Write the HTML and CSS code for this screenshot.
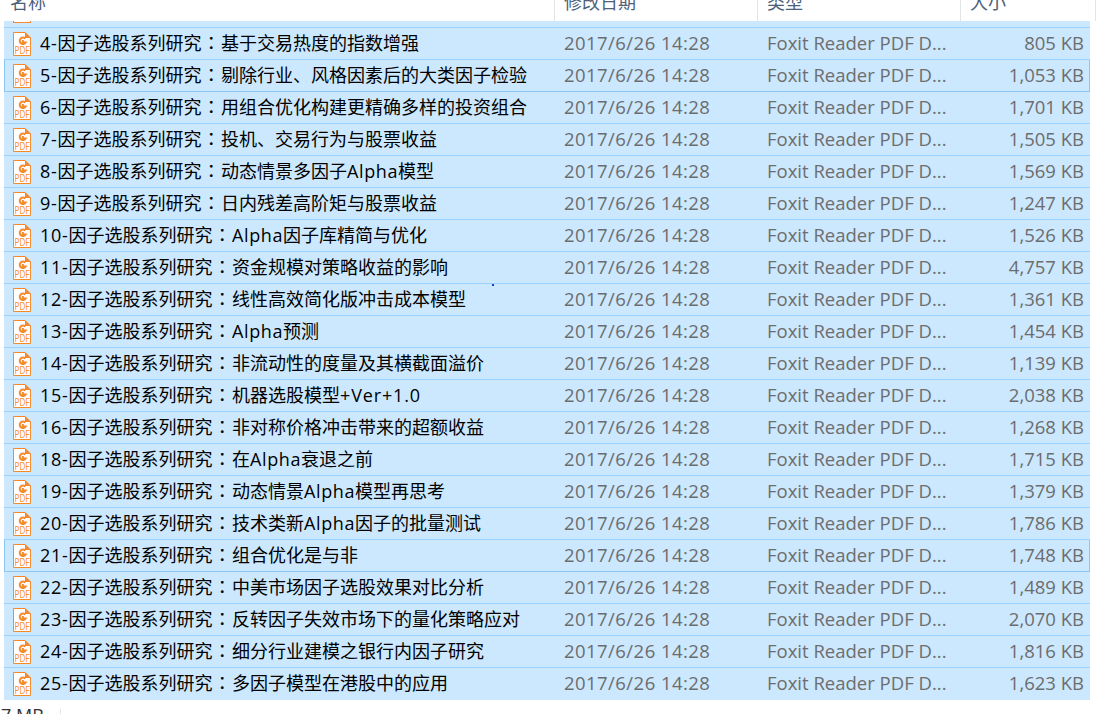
FILE: index.html
```html
<!DOCTYPE html>
<html lang="zh-CN">
<head>
    <meta charset="UTF-8">
    <title>因子选股系列研究</title>
    <link rel="stylesheet" href="styles.css">
</head>
<body>
    <!-- PDF file icon, reused by every row -->
    <svg class="defs" width="0" height="0">
        <symbol id="pdf" viewBox="0 0 18 24">
            <path d="M0.5 0.5H12L17.5 6V23.5H0.5Z" fill="#fff" stroke="#f58a2c"/>
            <path d="M12 0L18 6H12Z" fill="#f58a2c"/>
            <path d="M12.3 6.6A3.2 3.2 0 1 0 12.7 10.4H9.8V9H8.8" fill="none" stroke="#f58a2c" stroke-width="2"/>
            <text x="9" y="22" class="pdf-label" textLength="15" lengthAdjust="spacingAndGlyphs">PDF</text>
        </symbol>
    </svg>

    <!-- Column headers -->
    <div class="header">
        <div class="head-cell head-name">名称</div>
        <div class="head-cell head-date">修改日期</div>
        <div class="head-cell head-type">类型</div>
        <div class="head-cell head-size">大小</div>
    </div>

    <!-- File list -->
    <div class="list">
        <div class="row row-cut"><div class="icon-cut"></div></div>
        <div class="row"><svg class="icon"><use href="#pdf"/></svg><span class="name"><span class="num">4-</span>因子选股系列研究<span class="colon">：</span>基于交易热度的指数增强</span><span class="date">2017/6/26 14:28</span><span class="type">Foxit Reader PDF D...</span><span class="size">805 KB</span></div>
        <div class="row focus"><svg class="icon"><use href="#pdf"/></svg><span class="name"><span class="num">5-</span>因子选股系列研究<span class="colon">：</span>剔除行业、风格因素后的大类因子检验</span><span class="date">2017/6/26 14:28</span><span class="type">Foxit Reader PDF D...</span><span class="size">1,053 KB</span></div>
        <div class="row"><svg class="icon"><use href="#pdf"/></svg><span class="name"><span class="num">6-</span>因子选股系列研究<span class="colon">：</span>用组合优化构建更精确多样的投资组合</span><span class="date">2017/6/26 14:28</span><span class="type">Foxit Reader PDF D...</span><span class="size">1,701 KB</span></div>
        <div class="row"><svg class="icon"><use href="#pdf"/></svg><span class="name"><span class="num">7-</span>因子选股系列研究<span class="colon">：</span>投机、交易行为与股票收益</span><span class="date">2017/6/26 14:28</span><span class="type">Foxit Reader PDF D...</span><span class="size">1,505 KB</span></div>
        <div class="row"><svg class="icon"><use href="#pdf"/></svg><span class="name"><span class="num">8-</span>因子选股系列研究<span class="colon">：</span>动态情景多因子<span class="latin">Alpha</span>模型</span><span class="date">2017/6/26 14:28</span><span class="type">Foxit Reader PDF D...</span><span class="size">1,569 KB</span></div>
        <div class="row"><svg class="icon"><use href="#pdf"/></svg><span class="name"><span class="num">9-</span>因子选股系列研究<span class="colon">：</span>日内残差高阶矩与股票收益</span><span class="date">2017/6/26 14:28</span><span class="type">Foxit Reader PDF D...</span><span class="size">1,247 KB</span></div>
        <div class="row"><svg class="icon"><use href="#pdf"/></svg><span class="name"><span class="num">10-</span>因子选股系列研究<span class="colon">：</span><span class="latin">Alpha</span>因子库精简与优化</span><span class="date">2017/6/26 14:28</span><span class="type">Foxit Reader PDF D...</span><span class="size">1,526 KB</span></div>
        <div class="row"><svg class="icon"><use href="#pdf"/></svg><span class="name"><span class="num">11-</span>因子选股系列研究<span class="colon">：</span>资金规模对策略收益的影响</span><span class="date">2017/6/26 14:28</span><span class="type">Foxit Reader PDF D...</span><span class="size">4,757 KB</span></div>
        <div class="row"><svg class="icon"><use href="#pdf"/></svg><span class="name"><span class="num">12-</span>因子选股系列研究<span class="colon">：</span>线性高效简化版冲击成本模型</span><span class="date">2017/6/26 14:28</span><span class="type">Foxit Reader PDF D...</span><span class="size">1,361 KB</span><i class="speck"></i></div>
        <div class="row"><svg class="icon"><use href="#pdf"/></svg><span class="name"><span class="num">13-</span>因子选股系列研究<span class="colon">：</span><span class="latin">Alpha</span>预测</span><span class="date">2017/6/26 14:28</span><span class="type">Foxit Reader PDF D...</span><span class="size">1,454 KB</span></div>
        <div class="row"><svg class="icon"><use href="#pdf"/></svg><span class="name"><span class="num">14-</span>因子选股系列研究<span class="colon">：</span>非流动性的度量及其横截面溢价</span><span class="date">2017/6/26 14:28</span><span class="type">Foxit Reader PDF D...</span><span class="size">1,139 KB</span></div>
        <div class="row"><svg class="icon"><use href="#pdf"/></svg><span class="name"><span class="num">15-</span>因子选股系列研究<span class="colon">：</span>机器选股模型<span class="latin ver">+Ver+1.0</span></span><span class="date">2017/6/26 14:28</span><span class="type">Foxit Reader PDF D...</span><span class="size">2,038 KB</span></div>
        <div class="row"><svg class="icon"><use href="#pdf"/></svg><span class="name"><span class="num">16-</span>因子选股系列研究<span class="colon">：</span>非对称价格冲击带来的超额收益</span><span class="date">2017/6/26 14:28</span><span class="type">Foxit Reader PDF D...</span><span class="size">1,268 KB</span></div>
        <div class="row"><svg class="icon"><use href="#pdf"/></svg><span class="name"><span class="num">18-</span>因子选股系列研究<span class="colon">：</span>在<span class="latin">Alpha</span>衰退之前</span><span class="date">2017/6/26 14:28</span><span class="type">Foxit Reader PDF D...</span><span class="size">1,715 KB</span></div>
        <div class="row"><svg class="icon"><use href="#pdf"/></svg><span class="name"><span class="num">19-</span>因子选股系列研究<span class="colon">：</span>动态情景<span class="latin">Alpha</span>模型再思考</span><span class="date">2017/6/26 14:28</span><span class="type">Foxit Reader PDF D...</span><span class="size">1,379 KB</span></div>
        <div class="row"><svg class="icon"><use href="#pdf"/></svg><span class="name"><span class="num">20-</span>因子选股系列研究<span class="colon">：</span>技术类新<span class="latin">Alpha</span>因子的批量测试</span><span class="date">2017/6/26 14:28</span><span class="type">Foxit Reader PDF D...</span><span class="size">1,786 KB</span></div>
        <div class="row focus"><svg class="icon"><use href="#pdf"/></svg><span class="name"><span class="num">21-</span>因子选股系列研究<span class="colon">：</span>组合优化是与非</span><span class="date">2017/6/26 14:28</span><span class="type">Foxit Reader PDF D...</span><span class="size">1,748 KB</span></div>
        <div class="row"><svg class="icon"><use href="#pdf"/></svg><span class="name"><span class="num">22-</span>因子选股系列研究<span class="colon">：</span>中美市场因子选股效果对比分析</span><span class="date">2017/6/26 14:28</span><span class="type">Foxit Reader PDF D...</span><span class="size">1,489 KB</span></div>
        <div class="row"><svg class="icon"><use href="#pdf"/></svg><span class="name"><span class="num">23-</span>因子选股系列研究<span class="colon">：</span>反转因子失效市场下的量化策略应对</span><span class="date">2017/6/26 14:28</span><span class="type">Foxit Reader PDF D...</span><span class="size">2,070 KB</span></div>
        <div class="row"><svg class="icon"><use href="#pdf"/></svg><span class="name"><span class="num">24-</span>因子选股系列研究<span class="colon">：</span>细分行业建模之银行内因子研究</span><span class="date">2017/6/26 14:28</span><span class="type">Foxit Reader PDF D...</span><span class="size">1,816 KB</span></div>
        <div class="row last"><svg class="icon"><use href="#pdf"/></svg><span class="name"><span class="num">25-</span>因子选股系列研究<span class="colon">：</span>多因子模型在港股中的应用</span><span class="date">2017/6/26 14:28</span><span class="type">Foxit Reader PDF D...</span><span class="size">1,623 KB</span></div>
    </div>

    <!-- Status bar, cut off by the window -->
    <div class="status">
        <div class="status-size">7 MB</div>
    </div>
</body>
</html>
```

FILE: styles.css
```css
/* Reset */
* {
    box-sizing: border-box;
    margin: 0;
    padding: 0;
}

body {
    width: 1119px;
    height: 714px;
    overflow: hidden;
    background-color: #fff;
    font-family: "Open Sans", "Noto Sans CJK SC", sans-serif;
    font-size: 18px;
}

.defs {
    display: block;
    height: 0;
}

/* Header */
.header {
    display: flex;
    height: 21px;
    overflow: hidden;
    color: #4c607a;
}

.head-cell {
    height: 21px;
    padding-left: 9px;
    line-height: 5px;
    border-right: 1px solid #e5e5e5;
}

.head-name {
    width: 555px;
    padding-left: 10px;
}

.head-date {
    width: 203px;
}

.head-type {
    width: 203px;
}

.head-size {
    width: 135px;
}

/* File rows */
.list {
    width: 1086px;
    margin-left: 4px;
    background-color: #cce8ff;
}

.row {
    position: relative;
    display: flex;
    align-items: center;
    height: 32px;
    padding-left: 9px;
    border-bottom: 1px solid #99d1ff;
    white-space: nowrap;
}

.row-cut {
    height: 7px;
    align-items: flex-start;
}

/* bottom edge of the icon scrolled out of view */
.icon-cut {
    width: 18px;
    height: 2px;
    background-color: #fff;
    border: 1px solid #f58a2c;
    border-top: none;
}

.last {
    border-bottom: none;
    padding-bottom: 1px;
}

.focus {
    border-left: 1px solid #8cc6f5;
    border-right: 1px solid #8cc6f5;
    border-bottom-color: #8cc6f5;
    padding-left: 8px;
}

.icon {
    flex: none;
    width: 18px;
    height: 24px;
}

.pdf-label {
    font-family: "Open Sans", sans-serif;
    font-size: 10px;
    fill: #f58a2c;
    text-anchor: middle;
}

.name {
    width: 524px;
    margin-left: 9px;
    padding-bottom: 4px;
    color: #000;
}

/* file numbers and latin words run a bit wider than the font gives */
.num {
    letter-spacing: 0.7px;
}

.latin {
    letter-spacing: 0.6px;
}

.ver {
    letter-spacing: 0.85px;
}

/* centred full-width colon, the TC form of the glyph */
.colon {
    margin: 0 0.8px;
    font-family: "Noto Sans CJK TC", sans-serif;
    font-feature-settings: "locl" 0;
}

.date,
.type,
.size {
    padding-bottom: 2px;
    font-size: 18.5px;
    color: #6d6d6d;
}

.date {
    width: 203px;
    letter-spacing: 0.45px;
}

.type {
    width: 203px;
}

.size {
    width: 114px;
    text-align: right;
}

/* Stray blue dot on the screen */
.speck {
    position: absolute;
    left: 488px;
    top: 0;
    width: 2px;
    height: 2px;
    background-color: #1a3fd0;
}

/* Status bar */
.status {
    height: 14px;
    margin-top: 9px;
    overflow: hidden;
}

.status-size {
    width: 61px;
    height: 14px;
    padding-left: 1px;
    line-height: 13px;
    color: #333;
    border-right: 1px solid #e5e5e5;
}
```
